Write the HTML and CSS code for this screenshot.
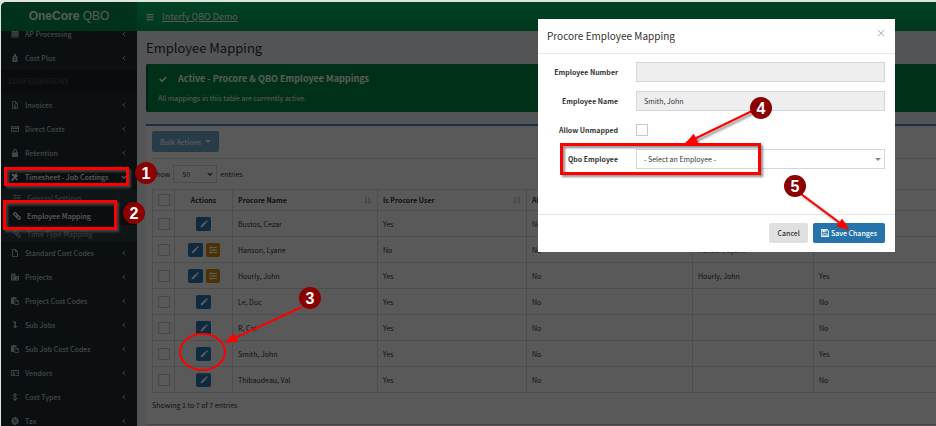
FILE: index.html
```
<!DOCTYPE html>
<html lang="en">
<head>
    <meta charset="UTF-8">
    <meta name="viewport" content="width=device-width, initial-scale=1.0">
    <title>OneCore QBO - Employee Mapping</title>
    <link rel="stylesheet" href="styles.css">
</head>
<body>
    <!-- Shared icons -->
    <svg class="sprite" aria-hidden="true">
        <symbol id="i-left" viewBox="0 0 16 16"><path d="M11 2 5 8l6 6" fill="none" stroke="currentColor" stroke-width="2.5"/></symbol>
        <symbol id="i-down" viewBox="0 0 16 16"><path d="M2 5l6 6 6-6" fill="none" stroke="currentColor" stroke-width="3"/></symbol>
        <symbol id="i-bars" viewBox="0 0 16 16"><path d="M1 2h14v2.5H1zM1 7h14v2.5H1zM1 12h14v2.5H1z"/></symbol>
        <symbol id="i-calc" viewBox="0 0 16 16"><path fill-rule="evenodd" d="M1 1h14v14H1zM3 5h2v2H3zM7 5h2v2H7zM11 5h2v2h-2zM3 9h2v2H3zM7 9h2v2H7zM11 9h2v2h-2zM3 12.500h2v1.500H3zM7 12.500h2v1.500H7zM11 12.500h2v1.500h-2z"/></symbol>
        <symbol id="i-bag" viewBox="0 0 16 16"><path fill-rule="evenodd" d="M6 0h4v3l3 3v10H3V6l3-3zM7 6v1L6 8v1l3 1v1H6v1h1v1h2v-1l1-1v-1L7 9V8h3V7H9V6z"/></symbol>
        <symbol id="i-invoice" viewBox="0 0 16 16"><path fill="none" stroke="currentColor" stroke-width="1.600" d="M3 1h6l4 4v10H3zM9 1v4h4M5.500 8h5M5.500 10.500h5M5.500 13h5"/></symbol>
        <symbol id="i-card" viewBox="0 0 16 16"><path fill-rule="evenodd" d="M0 2h16v12H0zM1.500 3.500v1.500h13V3.500zM1.500 8v4.500h13V8zM3 10h3v1.200H3zM7 10h4v1.200H7z"/></symbol>
        <symbol id="i-lock" viewBox="0 0 16 16"><path fill-rule="evenodd" d="M2 7h2V4a4 4 0 0 1 8 0v3h2v9H2zM6 7h4V4a2 2 0 0 0-4 0z"/></symbol>
        <symbol id="i-tools" viewBox="0 0 16 16"><path d="M1 3 3 1l3 2v2l3 3 5 5-2 2-5-5-3-4H3zM10 1a4 4 0 0 1 3 0l-2 2 1 2 3-1a4 4 0 0 1-5 4L4 15a1.500 1.500 0 0 1-3-2l6-6a4 4 0 0 1 3-6z"/></symbol>
        <symbol id="i-sliders" viewBox="0 0 16 16"><path d="M0 2h3V1h3v1h10v2H6v1H3V4H0zM0 7h9V6h3v1h4v2h-4v1H9V9H0zM0 12h3v-1h3v1h10v2H6v1H3v-1H0z"/></symbol>
        <symbol id="i-link" viewBox="0 0 16 16"><g fill="none" stroke="currentColor" stroke-width="2.400"><rect x="1" y="2.500" width="8" height="5" rx="2.500" transform="rotate(45 5 5)"/><rect x="7" y="8.500" width="8" height="5" rx="2.500" transform="rotate(45 11 11)"/></g></symbol>
        <symbol id="i-file" viewBox="0 0 16 16"><path fill="none" stroke="currentColor" stroke-width="1.800" d="M3 1h6l4 4v10H3zM9 1v4h4"/></symbol>
        <symbol id="i-city" viewBox="0 0 16 16"><path fill-rule="evenodd" d="M0 1h9v5h7v9H0zM2 3v2h2V3zM5 3v2h2V3zM2 7v2h2V7zM5 7v2h2V7zM2 11v2h2v-2zM11 8v2h2V8zM11 12v2h2v-2z"/></symbol>
        <symbol id="i-paste" viewBox="0 0 16 16"><path d="M0 1h3l1-1h3l1 1h3v3H6v10H0z"/><path fill-rule="evenodd" d="M7 5h5l4 4v7H7zM8.500 6.500v8h6V10H11V6.500z"/></symbol>
        <symbol id="i-turn" viewBox="0 0 16 16"><path d="M3 1h7v9h3l-4.500 5L4 10h3V4H5z"/></symbol>
        <symbol id="i-id" viewBox="0 0 16 16"><path fill-rule="evenodd" d="M0 2h16v12H0zM1.500 4v8.500h13V4zM4 5h3v3H4zM3 9h5v2.500H3zM10 6h3.500v1.200H10zM10 9h3.500v1.200H10z"/></symbol>
        <symbol id="i-dollar" viewBox="0 0 16 16"><path fill="none" stroke="currentColor" stroke-width="2" d="M12 5c0-3-8-3-8 0s8 3 8 6-8 3-8 0M8 0v16"/></symbol>
        <symbol id="i-tax" viewBox="0 0 16 16"><path fill-rule="evenodd" d="M8 0l2 1 3 1 1 3 2 3-2 3-1 3-3 1-2 1-2-1-3-1-1-3-2-3 2-3 1-3 3-1zM5 4v3h2V4zM9 9v3h2V9zM10.500 4 4.500 11l1 1 6-7z"/></symbol>
        <symbol id="i-check" viewBox="0 0 16 16"><path fill="none" stroke="currentColor" stroke-width="3.500" d="M1.500 8 6 12.500 14.500 4"/></symbol>
        <symbol id="i-pencil" viewBox="0 0 16 16"><path d="M1 15l1-4 8-8 3 3-8 8zM11 2l2-2 3 3-2 2z"/></symbol>
        <symbol id="i-save" viewBox="0 0 16 16"><path fill-rule="evenodd" d="M0 0h12l4 4v12H0zM1.500 1.500v13h13V5L11 1.500zM3 2h8v4.500H3zM7.500 3v2.500h2V3zM3 9h10v5.500H3zM4.500 10.500V13h7v-2.500z"/></symbol>
        <symbol id="i-sort" viewBox="0 0 16 16"><path d="M3 1h2v10h2l-3 4-3-4h2zM11 15h2V5h2l-3-4-3 4h2z"/></symbol>
        <symbol id="i-sort-az" viewBox="0 0 16 16"><path d="M3 1h2v10h2l-3 4-3-4h2zM8 2h2v2H8zM8 5.500h4v2H8zM8 9h6v2H8zM8 12.500h8v2H8z"/></symbol>
    </svg>

    <div class="wrapper">
        <header class="main-header">
            <a href="#" class="logo"><b>OneCore</b> QBO</a>
            <nav class="navbar">
                <button type="button" class="sidebar-toggle" aria-label="Toggle navigation"><svg class="icon"><use href="#i-bars"/></svg></button>
                <a href="#">Interfy QBO Demo</a>
            </nav>
        </header>

        <div class="layout">
            <aside class="sidebar">
                <ul class="sidebar-menu">
                    <li><a href="#"><svg class="icon"><use href="#i-calc"/></svg><span>AP Processing</span><svg class="angle"><use href="#i-left"/></svg></a></li>
                    <li><a href="#"><svg class="icon"><use href="#i-bag"/></svg><span>Cost Plus</span><svg class="angle"><use href="#i-left"/></svg></a></li>
                    <li class="header">CONFIGURATIONS</li>
                    <li><a href="#"><svg class="icon"><use href="#i-invoice"/></svg><span>Invoices</span><svg class="angle"><use href="#i-left"/></svg></a></li>
                    <li><a href="#"><svg class="icon"><use href="#i-card"/></svg><span>Direct Costs</span><svg class="angle"><use href="#i-left"/></svg></a></li>
                    <li><a href="#"><svg class="icon"><use href="#i-lock"/></svg><span>Retention</span><svg class="angle"><use href="#i-left"/></svg></a></li>
                    <li class="active">
                        <a href="#"><svg class="icon"><use href="#i-tools"/></svg><span>Timesheet - Job Costings</span><svg class="angle"><use href="#i-down"/></svg></a>
                        <ul class="submenu">
                            <li><a href="#"><svg class="icon"><use href="#i-sliders"/></svg><span>General Settings</span></a></li>
                            <li class="current"><a href="#"><svg class="icon"><use href="#i-link"/></svg><span>Employee Mapping</span></a></li>
                            <li><a href="#"><svg class="icon"><use href="#i-link"/></svg><span>Time Type Mapping</span></a></li>
                        </ul>
                    </li>
                    <li><a href="#"><svg class="icon"><use href="#i-file"/></svg><span>Standard Cost Codes</span><svg class="angle"><use href="#i-left"/></svg></a></li>
                    <li><a href="#"><svg class="icon"><use href="#i-city"/></svg><span>Projects</span><svg class="angle"><use href="#i-left"/></svg></a></li>
                    <li><a href="#"><svg class="icon"><use href="#i-paste"/></svg><span>Project Cost Codes</span><svg class="angle"><use href="#i-left"/></svg></a></li>
                    <li><a href="#"><svg class="icon"><use href="#i-turn"/></svg><span>Sub Jobs</span><svg class="angle"><use href="#i-left"/></svg></a></li>
                    <li><a href="#"><svg class="icon"><use href="#i-paste"/></svg><span>Sub Job Cost Codes</span><svg class="angle"><use href="#i-left"/></svg></a></li>
                    <li><a href="#"><svg class="icon"><use href="#i-id"/></svg><span>Vendors</span><svg class="angle"><use href="#i-left"/></svg></a></li>
                    <li><a href="#"><svg class="icon"><use href="#i-dollar"/></svg><span>Cost Types</span><svg class="angle"><use href="#i-left"/></svg></a></li>
                    <li><a href="#"><svg class="icon"><use href="#i-tax"/></svg><span>Tax</span><svg class="angle"><use href="#i-left"/></svg></a></li>
                </ul>
            </aside>

            <main class="content">
                <h1>Employee Mapping</h1>

                <div class="callout">
                    <h4><svg class="icon"><use href="#i-check"/></svg>Active - Procore &amp; QBO Employee Mappings</h4>
                    <p>All mappings in this table are currently active.</p>
                </div>

                <div class="box">
                    <button type="button" class="btn btn-bulk">Bulk Actions <span class="caret"></span></button>
                    <hr>
                    <div class="length">
                        <label for="page-length">Show</label>
                        <span class="select-wrap">
                            <select id="page-length"><option>50</option></select>
                            <svg class="angle"><use href="#i-down"/></svg>
                        </span>
                        <span>entries</span>
                    </div>

                    <table>
                        <colgroup>
                            <col class="col-check"><col class="col-actions"><col class="col-name"><col class="col-user"><col class="col-allow"><col class="col-qbo"><col>
                        </colgroup>
                        <thead>
                            <tr>
                                <th><input type="checkbox" aria-label="Select all"></th>
                                <th class="center">Actions</th>
                                <th><div class="sortable">Procore Name<svg class="icon"><use href="#i-sort-az"/></svg></div></th>
                                <th><div class="sortable">Is Procore User<svg class="icon"><use href="#i-sort"/></svg></div></th>
                                <th>Allow Unmapped</th>
                                <th></th>
                                <th></th>
                            </tr>
                        </thead>
                        <tbody>
                            <tr>
                                <td><input type="checkbox" aria-label="Select Bustos, Cezar"></td>
                                <td class="center"><button type="button" class="btn-icon" aria-label="Edit"><svg class="icon"><use href="#i-pencil"/></svg></button></td>
                                <td>Bustos, Cezar</td><td>Yes</td><td>No</td><td></td><td></td>
                            </tr>
                            <tr>
                                <td><input type="checkbox" aria-label="Select Hanson, Lyane"></td>
                                <td class="center"><button type="button" class="btn-icon" aria-label="Edit"><svg class="icon"><use href="#i-pencil"/></svg></button><button type="button" class="btn-icon settings" aria-label="Settings"><svg class="icon"><use href="#i-sliders"/></svg></button></td>
                                <td>Hanson, Lyane</td><td>No</td><td>No</td><td>Hanson, Lyane</td><td></td>
                            </tr>
                            <tr>
                                <td><input type="checkbox" aria-label="Select Hourly, John"></td>
                                <td class="center"><button type="button" class="btn-icon" aria-label="Edit"><svg class="icon"><use href="#i-pencil"/></svg></button><button type="button" class="btn-icon settings" aria-label="Settings"><svg class="icon"><use href="#i-sliders"/></svg></button></td>
                                <td>Hourly, John</td><td>Yes</td><td>No</td><td>Hourly, John</td><td>Yes</td>
                            </tr>
                            <tr>
                                <td><input type="checkbox" aria-label="Select Le, Duc"></td>
                                <td class="center"><button type="button" class="btn-icon" aria-label="Edit"><svg class="icon"><use href="#i-pencil"/></svg></button></td>
                                <td>Le, Duc</td><td>Yes</td><td>No</td><td></td><td>No</td>
                            </tr>
                            <tr>
                                <td><input type="checkbox" aria-label="Select R, Cat"></td>
                                <td class="center"><button type="button" class="btn-icon" aria-label="Edit"><svg class="icon"><use href="#i-pencil"/></svg></button></td>
                                <td>R, Cat</td><td>Yes</td><td>No</td><td></td><td>No</td>
                            </tr>
                            <tr>
                                <td><input type="checkbox" aria-label="Select Smith, John"></td>
                                <td class="center"><button type="button" class="btn-icon" aria-label="Edit"><svg class="icon"><use href="#i-pencil"/></svg></button></td>
                                <td>Smith, John</td><td>Yes</td><td>No</td><td></td><td>Yes</td>
                            </tr>
                            <tr>
                                <td><input type="checkbox" aria-label="Select Thibaudeau, Val"></td>
                                <td class="center"><button type="button" class="btn-icon" aria-label="Edit"><svg class="icon"><use href="#i-pencil"/></svg></button></td>
                                <td>Thibaudeau, Val</td><td>Yes</td><td>No</td><td></td><td>No</td>
                            </tr>
                        </tbody>
                    </table>
                    <p class="info">Showing 1 to 7 of 7 entries</p>
                </div>
            </main>
        </div>
        <div class="backdrop"></div>
    </div>

    <!-- Edit mapping dialog -->
    <div class="modal" role="dialog" aria-labelledby="modal-title">
        <div class="modal-header">
            <h2 id="modal-title">Procore Employee Mapping</h2>
            <button type="button" class="close" aria-label="Close">&times;</button>
        </div>
        <form class="modal-body">
            <label for="emp-number">Employee Number</label>
            <input type="text" id="emp-number" readonly>
            <label for="emp-name">Employee Name</label>
            <input type="text" id="emp-name" value="Smith, John" readonly>
            <label for="allow-unmapped">Allow Unmapped</label>
            <input type="checkbox" id="allow-unmapped">
            <label for="qbo-employee">Qbo Employee</label>
            <span class="select-wrap">
                <select id="qbo-employee"><option>- Select an Employee -</option></select>
                <span class="caret"></span>
            </span>
        </form>
        <div class="modal-footer">
            <button type="button" class="btn btn-cancel">Cancel</button>
            <button type="button" class="btn btn-save"><svg class="icon"><use href="#i-save"/></svg>Save Changes</button>
        </div>
    </div>

    <!-- Walkthrough steps -->
    <svg class="steps" width="936" height="426" viewBox="0 0 936 426">
        <defs>
            <marker id="head" viewBox="0 0 12 10" refX="11" refY="5" markerWidth="13" markerHeight="10" markerUnits="userSpaceOnUse" orient="auto"><path d="M0 0 12 5 0 10z" fill="#f00"/></marker>
        </defs>
        <g class="marks">
            <rect x="5.500" y="168.500" width="122" height="16"/>
            <rect x="4.500" y="201.500" width="111" height="27"/>
            <rect x="561.500" y="144.500" width="198" height="29"/>
            <ellipse cx="202.500" cy="352" rx="22.500" ry="18"/>
            <path d="M302 307 226 342" marker-end="url(#head)"/>
            <path d="M752 111 686 143" marker-end="url(#head)"/>
            <path d="M801 194 848 229" marker-end="url(#head)"/>
        </g>
        <g class="badges">
            <circle cx="146" cy="173" r="11"/><text x="146" y="179">1</text>
            <circle cx="134" cy="213" r="11"/><text x="134" y="219">2</text>
            <circle cx="310" cy="298" r="11"/><text x="310" y="304">3</text>
            <circle cx="761" cy="108" r="11"/><text x="761" y="114">4</text>
            <circle cx="795" cy="186" r="11"/><text x="795" y="192">5</text>
        </g>
    </svg>
</body>
</html>
```
FILE: styles.css
```
* {
    box-sizing: border-box;
}

body {
    margin: 0;
    height: 100vh;
    overflow: hidden;
    position: relative;
    background-color: #dfe5e0;
    font-family: "Noto Sans CJK SC", "Open Sans", sans-serif;
    font-size: 7px;
    line-height: 12px;
    color: #333;
}

h1, h2, h4, p {
    margin: 0;
    font-weight: 400;
}

ul {
    margin: 0;
    padding: 0;
    list-style: none;
}

a {
    color: inherit;
    text-decoration: none;
}

button, input, select {
    font: inherit;
    color: inherit;
    margin: 0;
}

.sprite {
    position: absolute;
    width: 0;
    height: 0;
}

.icon {
    width: 8px;
    height: 8px;
    fill: currentColor;
    flex: none;
}

.angle {
    width: 6px;
    height: 6px;
    flex: none;
}

.caret {
    display: inline-block;
    border: 3px solid transparent;
    border-top-color: currentColor;
    border-bottom: 0;
}

/* Page shell */
.wrapper {
    position: relative;
    height: calc(100vh - 2px);
    margin: 2px 0 0 1px;
    border-top-left-radius: 5px;
    overflow: hidden;
    background-color: #ecf0f5;
}

.backdrop {
    position: absolute;
    inset: 0;
    background-color: rgba(0, 0, 0, 0.65);
}

.main-header {
    position: relative;
    display: flex;
    height: 29px;
    color: #fff;
}

.logo {
    width: 136px;
    background-color: #008d4c;
    font-family: "Liberation Sans", Arial, sans-serif;
    font-size: 12px;
    line-height: 28px;
    text-align: center;
}

.navbar {
    flex: 1;
    display: flex;
    align-items: center;
    gap: 8px;
    padding-left: 9px;
    background: linear-gradient(#00c068, #009c54);
    font-size: 9px;
}

.navbar a {
    text-decoration: underline;
}

.sidebar-toggle {
    display: flex;
    padding: 0;
    border: 0;
    background: none;
}

.layout {
    display: flex;
}

/* Sidebar */
.sidebar {
    flex: none;
    width: 136px;
    height: calc(100vh - 31px);
    overflow: hidden;
    background-color: #222d32;
    color: #b8c7ce;
    font-weight: 500;
}

.sidebar-menu {
    margin-top: -9px;
}

.sidebar a {
    display: flex;
    align-items: center;
    gap: 6px;
    height: 24px;
    padding: 0 10px;
}

.sidebar span {
    flex: 1;
    white-space: nowrap;
}

.sidebar .header {
    height: 23px;
    padding-left: 8px;
    background-color: #1a2226;
    color: #4b646f;
    font-weight: 400;
    line-height: 23px;
}

.sidebar .active > a {
    background-color: #1e282c;
    color: #fff;
}

.submenu {
    height: 52px;
    overflow: hidden;
    background-color: #2c3b41;
    color: #8aa4af;
}

.submenu a {
    height: 18px;
    padding-left: 12px;
}

.submenu .current {
    background-color: #1e282c;
    color: #fff;
}

/* Content */
.content {
    flex: 1;
    min-width: 0;
    padding: 6px 0 0 9px;
}

h1 {
    font-size: 13px;
    line-height: 22px;
    margin-bottom: 5px;
}

.callout {
    height: 48px;
    padding: 7px 10px;
    border-left: 2px solid #00622f;
    border-radius: 2px 0 0 2px;
    background-color: #008d46;
    color: #fff;
}

.callout h4 {
    display: flex;
    align-items: center;
    gap: 10px;
    font-size: 9px;
    font-weight: 700;
    line-height: 16px;
    margin-bottom: 5px;
}

.callout .icon {
    width: 10px;
}

.box {
    margin-top: 12px;
    padding: 5px 0 13px 6px;
    border-top: 2px solid #3c8dbc;
    border-bottom: 1px solid #ccc;
    background-color: #fff;
}

.btn {
    display: inline-flex;
    align-items: center;
    gap: 4px;
    height: 20px;
    padding: 0 8px;
    border: 0;
    border-radius: 2px;
    font-weight: 500;
}

.btn-bulk {
    display: flex;
    height: 21px;
    background-color: #73a8cd;
    color: #fff;
}

hr {
    margin: 6px 0;
    border: 0;
    border-top: 1px solid #ddd;
}

.length {
    display: flex;
    align-items: center;
    gap: 3px;
    margin-bottom: 6px;
}

.select-wrap {
    position: relative;
    display: block;
}

select {
    display: block;
    appearance: none;
    width: 44px;
    height: 18px;
    padding: 0 8px;
    border: 1px solid #d2d6de;
    border-radius: 0;
    background-color: #fff;
}

.select-wrap .angle,
.select-wrap .caret {
    position: absolute;
    right: 4px;
    top: 6px;
}

table {
    width: 100%;
    table-layout: fixed;
    border-collapse: collapse;
}

.col-check { width: 22px; }
.col-actions { width: 58px; }
.col-name { width: 145px; }
.col-user { width: 149px; }
.col-allow { width: 166px; }
.col-qbo { width: 121px; }

th, td {
    height: 26px;
    padding: 0 5px;
    border: 1px solid #ddd;
    text-align: left;
    vertical-align: middle;
    white-space: nowrap;
}

th {
    height: 21px;
    font-weight: 700;
}

th:last-child, td:last-child {
    border-right: 0;
}

th.center, td.center {
    text-align: center;
}

.sortable {
    display: flex;
    justify-content: space-between;
    align-items: center;
}

.sortable .icon {
    color: #bbb;
}

input[type="checkbox"] {
    display: block;
    appearance: none;
    width: 12px;
    height: 12px;
    border: 1px solid #c3cad6;
    background-color: #fff;
}

.btn-icon {
    display: inline-flex;
    align-items: center;
    justify-content: center;
    width: 15px;
    height: 14px;
    padding: 0;
    border: 0;
    border-radius: 2px;
    background-color: #2a7ab8;
    color: #fff;
    vertical-align: middle;
}

.btn-icon.settings {
    margin-left: 3px;
    width: 14px;
    background-color: #e08e0b;
}

.info {
    margin-top: 6px;
}

/* Modal */
.modal {
    position: absolute;
    top: 19px;
    right: 41px;
    width: 357px;
    background-color: #fff;
}

.modal-header {
    display: flex;
    justify-content: space-between;
    align-items: flex-start;
    height: 35px;
    padding: 8px 9px;
    border-bottom: 1px solid #e9e9e9;
}

.modal-header h2 {
    font-size: 10px;
    line-height: 18px;
}

.close {
    padding: 0;
    border: 0;
    background: none;
    color: #aaa;
    font-size: 10px;
}

.modal-body {
    display: grid;
    grid-template-columns: 71px 1fr;
    grid-auto-rows: 20px;
    gap: 9px 18px;
    align-items: center;
    padding: 8px 10px 45px 9px;
}

.modal-body label {
    font-weight: 700;
    text-align: right;
    white-space: nowrap;
}

.modal-body input[type="text"],
.modal-body select {
    width: 100%;
    height: 20px;
    padding: 0 7px;
    border: 1px solid #d2d6de;
    border-radius: 0;
}

.modal-body input[type="text"] {
    background-color: #eee;
}

.modal-body .caret {
    top: 9px;
    color: #888;
}

.modal-footer {
    display: flex;
    justify-content: flex-end;
    gap: 5px;
    padding: 8px 10px 9px;
    border-top: 1px solid #e5e5e5;
}

.btn-cancel {
    background-color: #e0e0e0;
}

.btn-save {
    gap: 2px;
    background-color: #2573ab;
    color: #fff;
}

/* Walkthrough steps */
.steps {
    position: absolute;
    top: 0;
    left: 0;
    pointer-events: none;
}

.marks {
    fill: none;
    stroke: #f00;
    stroke-width: 3;
    filter: drop-shadow(2px 2px 1px rgba(90, 90, 90, 0.7));
}

.marks ellipse,
.marks path {
    stroke-width: 2;
}

.badges {
    fill: #8b0000;
    font: 700 16px "Liberation Sans", Arial, sans-serif;
    text-anchor: middle;
}

.badges text {
    fill: #fff;
}
```
